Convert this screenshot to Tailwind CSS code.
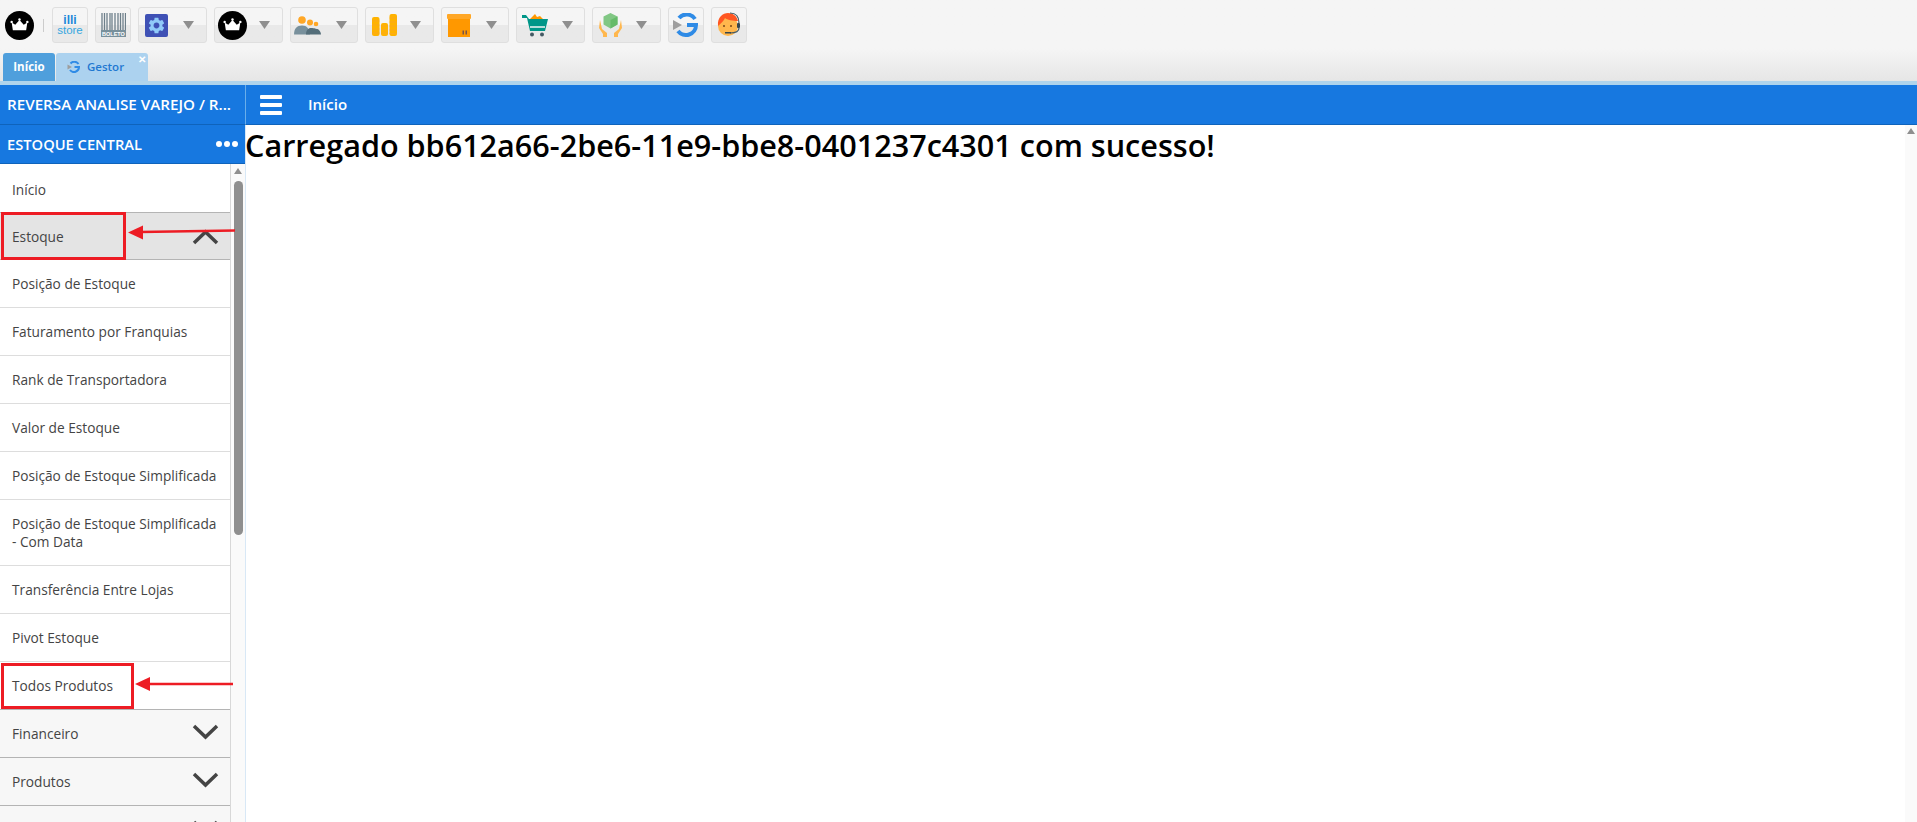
<!DOCTYPE html>
<html lang="pt-br">
<head>
    <meta charset="UTF-8" />
    <title>Gestor</title>
    <script src="https://cdn.jsdelivr.net/npm/@tailwindcss/browser@4"></script>
</head>
<body class="h-[822px] overflow-hidden bg-white font-['Open_Sans',sans-serif] text-[#444]">

    <!-- Barra de ferramentas -->
    <header class="h-[81px] bg-gradient-to-b from-[#f5f5f5] from-60% to-[#e6e6e6] flex flex-col justify-between">
        <div class="flex items-center pt-[7px] pl-[5px] h-[43px]">
            <svg class="w-[29px] h-[29px]" viewBox="0 0 24 24"><circle cx="12" cy="12" r="12" fill="#000"/><path d="M5.500 9.500l3 1.800L12 7.500l3.500 3.800 3-1.800-1 6.500h-11z" fill="#fff"/><circle cx="5.500" cy="9" r="1" fill="#fff"/><circle cx="12" cy="7" r="1" fill="#fff"/><circle cx="18.500" cy="9" r="1" fill="#fff"/></svg>
            <div class="w-px h-[13px] bg-[#ccc] ml-[9px] mr-[8px]"></div>

            <div class="w-[36px] h-[36px] border border-[#dfdfdf] rounded-[3px] bg-gradient-to-b from-[#f5f5f5] from-50% to-[#e9e9e9] to-50% flex flex-col items-center justify-center font-['Liberation_Sans',sans-serif] leading-[9px] text-[#35a7e0] mr-[7px]">
                <span class="text-[12px] font-bold text-[#1e88d8]">illi</span><span class="text-[11.500px] mt-[1px]">store</span>
            </div>
            <div class="w-[36px] h-[36px] border border-[#dfdfdf] rounded-[3px] bg-gradient-to-b from-[#f5f5f5] from-50% to-[#e9e9e9] to-50% flex items-center justify-center mr-[7px]">
                <svg class="w-[25px] h-[24px]" viewBox="0 0 25 24"><path d="M1 0v17M3.500 0v17M6 0v17M9 0v17M11 0v17M14 0v17M17 0v17M19.500 0v17M22 0v17M24.500 0v17" stroke="#6d7f8a" stroke-width="1.300"/><rect x="0" y="17" width="25" height="7" fill="#78909c"/><text x="12.500" y="22.700" text-anchor="middle" font-size="5.500" font-weight="700" fill="#fff" font-family="Liberation Sans">BOLETO</text></svg>
            </div>

            <div class="w-[69px] h-[36px] border border-[#dfdfdf] rounded-[3px] bg-gradient-to-b from-[#f5f5f5] from-50% to-[#e9e9e9] to-50% flex items-center pl-[6px] mr-[7px]">
                <svg class="w-[23px] h-[23px]" viewBox="0 0 24 24"><rect width="24" height="24" rx="2" fill="#3f51b5"/><path transform="translate(1.800 1.800) scale(.85)" d="M19.140 12.940c.04-.3.06-.61.06-.94 0-.32-.02-.64-.07-.94l2.030-1.580a.49.49 0 0 0 .12-.61l-1.920-3.320a.488.488 0 0 0-.59-.22l-2.390.96c-.5-.38-1.030-.7-1.620-.94l-.36-2.540a.484.484 0 0 0-.48-.41h-3.840c-.24 0-.43.17-.47.41l-.36 2.540c-.59.24-1.130.57-1.620.94l-2.390-.96c-.22-.08-.47 0-.59.22L2.740 8.870c-.12.21-.08.47.12.61l2.030 1.580c-.05.3-.09.63-.09.94s.02.64.07.94l-2.030 1.580a.49.49 0 0 0-.12.61l1.920 3.320c.12.22.37.29.59.22l2.390-.96c.5.38 1.030.7 1.620.94l.36 2.540c.05.24.24.41.48.41h3.840c.24 0 .44-.17.47-.41l.36-2.540c.59-.24 1.130-.56 1.620-.94l2.390.96c.22.08.47 0 .59-.22l1.920-3.320c.12-.22.07-.47-.12-.61l-2.010-1.580zM12 15.600c-1.980 0-3.600-1.620-3.600-3.600s1.620-3.600 3.600-3.600 3.600 1.620 3.600 3.600-1.620 3.600-3.600 3.600z" fill="#90caf9"/></svg>
                <svg class="w-[11px] h-[8px] ml-[15px]" viewBox="0 0 11 8"><path d="M0 0h11L5.500 8z" fill="#8f8f8f"/></svg>
            </div>

            <div class="w-[69px] h-[36px] border border-[#dfdfdf] rounded-[3px] bg-gradient-to-b from-[#f5f5f5] from-50% to-[#e9e9e9] to-50% flex items-center pl-[3px] mr-[7px]">
                <svg class="w-[29px] h-[29px]" viewBox="0 0 24 24"><circle cx="12" cy="12" r="12" fill="#000"/><path d="M5.500 9.500l3 1.800L12 7.500l3.500 3.800 3-1.800-1 6.500h-11z" fill="#fff"/><circle cx="5.500" cy="9" r="1" fill="#fff"/><circle cx="12" cy="7" r="1" fill="#fff"/><circle cx="18.500" cy="9" r="1" fill="#fff"/></svg>
                <svg class="w-[11px] h-[8px] ml-[12px]" viewBox="0 0 11 8"><path d="M0 0h11L5.500 8z" fill="#8f8f8f"/></svg>
            </div>

            <div class="w-[68px] h-[36px] border border-[#dfdfdf] rounded-[3px] bg-gradient-to-b from-[#f5f5f5] from-50% to-[#e9e9e9] to-50% flex items-center pl-[3px] mr-[7px]">
                <svg class="w-[28px] h-[19px]" viewBox="0 0 28 19"><circle cx="8" cy="4" r="3.800" fill="#ffa726"/><circle cx="16" cy="6.500" r="3" fill="#ffa726"/><circle cx="22" cy="8" r="2.300" fill="#ffa726"/><path d="M0 18.500c0-6 3-9 8-9s7 3 8 9z" fill="#78909c"/><path d="M12 18.500c0-4 2-6.500 5-6.500 4 0 5 1 6 1s4 2 4 5.500z" fill="#546e7a"/></svg>
                <svg class="w-[11px] h-[8px] ml-[14px]" viewBox="0 0 11 8"><path d="M0 0h11L5.500 8z" fill="#8f8f8f"/></svg>
            </div>

            <div class="w-[69px] h-[36px] border border-[#dfdfdf] rounded-[3px] bg-gradient-to-b from-[#f5f5f5] from-50% to-[#e9e9e9] to-50% flex items-center pl-[6px] mr-[7px]">
                <svg class="w-[25px] h-[22px]" viewBox="0 0 25 22"><rect x="0" y="3" width="7.500" height="19" rx="2" fill="#ffb300"/><rect x="9" y="9" width="7" height="13" rx="2" fill="#ffb300"/><rect x="17.500" y="0" width="7.500" height="22" rx="2" fill="#ffb300"/><path d="M0 7h7.500M0 11h7.500M0 15h7.500M0 19h7.500M9 12h7M9 15.500h7M9 19h7M17.500 4h7.500M17.500 8h7.500M17.500 12h7.500M17.500 16h7.500M17.500 19.500h7.500" stroke="#f9a825" stroke-width=".7"/></svg>
                <svg class="w-[11px] h-[8px] ml-[13px]" viewBox="0 0 11 8"><path d="M0 0h11L5.500 8z" fill="#8f8f8f"/></svg>
            </div>

            <div class="w-[68px] h-[36px] border border-[#dfdfdf] rounded-[3px] bg-gradient-to-b from-[#f5f5f5] from-50% to-[#e9e9e9] to-50% flex items-center pl-[5px] mr-[7px]">
                <svg class="w-[24px] h-[23px]" viewBox="0 0 24 23"><rect width="24" height="5" rx="1" fill="#ffa726"/><rect x="1" y="5" width="22" height="18" fill="#ff9800"/><path d="M15.500 16.500h1.500v4h-1.500zM18.500 16.500h1.500v4h-1.500z" fill="#795548"/></svg>
                <svg class="w-[11px] h-[8px] ml-[15px]" viewBox="0 0 11 8"><path d="M0 0h11L5.500 8z" fill="#8f8f8f"/></svg>
            </div>

            <div class="w-[69px] h-[36px] border border-[#dfdfdf] rounded-[3px] bg-gradient-to-b from-[#f5f5f5] from-50% to-[#e9e9e9] to-50% flex items-center pl-[5px] mr-[7px]">
                <svg class="w-[26px] h-[24px]" viewBox="0 0 26 24"><path d="M8 6l5-5 2 3 3-1 3 3z" fill="#ff9800"/><path d="M0 2h4l3 4h19l-3 12H8L5 5H0z" fill="#009688"/><path d="M8 14h15" stroke="#f5f5f5" stroke-width="1.500"/><circle cx="10" cy="21.500" r="2" fill="#455a64"/><circle cx="20" cy="21.500" r="2" fill="#455a64"/></svg>
                <svg class="w-[11px] h-[8px] ml-[14px]" viewBox="0 0 11 8"><path d="M0 0h11L5.500 8z" fill="#8f8f8f"/></svg>
            </div>

            <div class="w-[69px] h-[36px] border border-[#dfdfdf] rounded-[3px] bg-gradient-to-b from-[#f5f5f5] from-50% to-[#e9e9e9] to-50% flex items-center pl-[6px] mr-[7px]">
                <svg class="w-[23px] h-[24px]" viewBox="0 0 23 24"><path d="M11.500 0l7 3.500v8l-7 4-7-4v-8z" fill="#81c784"/><path d="M11.500 7l7-3.500v8l-7 4z" fill="#66bb6a"/><path d="M1 7l2 9 5 4v4H4v-3L0 15zM22 7l-2 9-5 4v4h4v-3l4-6z" fill="#ffb74d"/></svg>
                <svg class="w-[11px] h-[8px] ml-[14px]" viewBox="0 0 11 8"><path d="M0 0h11L5.500 8z" fill="#8f8f8f"/></svg>
            </div>

            <div class="w-[36px] h-[36px] border border-[#dfdfdf] rounded-[3px] bg-gradient-to-b from-[#f5f5f5] from-50% to-[#e9e9e9] to-50% flex items-center justify-center mr-[7px]">
                <svg class="w-[26px] h-[24px]" viewBox="0 0 26 24"><path d="M22 6a10 10 0 0 0-16-1M5 18a10 10 0 0 0 18-6H14" fill="none" stroke="#2f8be6" stroke-width="4"/><path d="M0 7l9 5-9 5z" fill="#9e9e9e"/></svg>
            </div>
            <div class="w-[36px] h-[36px] border border-[#dfdfdf] rounded-[3px] bg-gradient-to-b from-[#f5f5f5] from-50% to-[#e9e9e9] to-50% flex items-center justify-center">
                <svg class="w-[26px] h-[26px]" viewBox="0 0 26 26"><circle cx="12" cy="14" r="10" fill="#ffb74d"/><path d="M2 14C1 5 7 1 12 1s9 3 10 8c-5 0-11-1-13-3-1 3-4 5-7 8z" fill="#ff5722"/><path d="M14 1c6 0 9 4 9 10" fill="none" stroke="#455a64" stroke-width="1.200"/><rect x="21" y="11" width="3" height="5" rx="1" fill="#37474f"/><path d="M23 16c0 4-4 5-9 5" fill="none" stroke="#455a64" stroke-width="1.200"/><rect x="9" y="20" width="6" height="1.500" fill="#37474f"/><circle cx="8" cy="14" r="1" fill="#784719"/><circle cx="15" cy="14" r="1" fill="#784719"/></svg>
            </div>
        </div>

        <!-- Abas -->
        <div class="flex pl-[3px] gap-px h-[28px] text-[11.500px]">
            <div class="w-[52px] rounded-t-[3px] bg-[#4f9fdc] text-white font-bold flex items-center justify-center">Início</div>
            <div class="relative w-[92px] rounded-t-[3px] bg-[#acd2ef] text-[#1f78d1] font-semibold flex items-center pl-[11px]">
                <svg class="w-[14px] h-[12px] mr-[6px]" viewBox="0 0 26 24"><path d="M22 6a10 10 0 0 0-16-1M5 18a10 10 0 0 0 18-6H14" fill="none" stroke="#2f8be6" stroke-width="4"/><path d="M0 7l9 5-9 5z" fill="#9e9e9e"/></svg>
                Gestor
                <span class="absolute right-[2px] top-[-1px] text-[10px] leading-[14px] text-white">✕</span>
            </div>
        </div>
    </header>
    <div class="h-[4px] bg-[#b0d4ec]"></div>

    <div class="flex h-[737px]">
        <!-- Menu lateral -->
        <aside class="w-[245px] shrink-0 flex flex-col">
            <div class="h-[40px] bg-[#1778e0] text-white text-[15.200px] font-semibold flex items-center pl-[7px] border-b border-[#0f63bb] shrink-0">REVERSA ANALISE VAREJO / R...</div>
            <div class="h-[39px] bg-[#1778e0] text-white text-[14.700px] font-semibold flex items-center justify-between pl-[7px] pr-[7px] border-b border-[#0f63bb] shrink-0">
                <span>ESTOQUE CENTRAL</span>
                <span class="flex gap-[2px]">
                    <i class="block w-[6px] h-[6px] rounded-full bg-white"></i><i class="block w-[6px] h-[6px] rounded-full bg-white"></i><i class="block w-[6px] h-[6px] rounded-full bg-white"></i>
                </span>
            </div>

            <div class="relative flex-1 flex overflow-hidden">
                <nav class="w-[231px] shrink-0 border-r border-[#d8d8d8] text-[13.700px] leading-[18px]">
                    <div class="h-[48px] flex items-center pl-[12px] pt-[3px]">Início</div>
                    <div class="h-[48px] flex items-center justify-between pl-[12px] pr-[11px] pt-[1px] bg-[#e4e4e4] border-y border-[#b4b4b4]">
                        Estoque
                        <svg class="w-[27px] h-[16px]" viewBox="0 0 27 16"><path d="M2 14L13.500 3 25 14" fill="none" stroke="#444" stroke-width="3.500"/></svg>
                    </div>
                    <div class="h-[48px] flex items-center pl-[12px] pt-[1px] border-b border-[#ddd]">Posição de Estoque</div>
                    <div class="h-[48px] flex items-center pl-[12px] pt-[1px] border-b border-[#ddd]">Faturamento por Franquias</div>
                    <div class="h-[48px] flex items-center pl-[12px] pt-[1px] border-b border-[#ddd]">Rank de Transportadora</div>
                    <div class="h-[48px] flex items-center pl-[12px] pt-[1px] border-b border-[#ddd]">Valor de Estoque</div>
                    <div class="h-[48px] flex items-center pl-[12px] pt-[1px] border-b border-[#ddd]">Posição de Estoque Simplificada</div>
                    <div class="h-[66px] flex items-center pl-[12px] pr-[12px] pt-[1px] border-b border-[#ddd]">Posição de Estoque Simplificada - Com Data</div>
                    <div class="h-[48px] flex items-center pl-[12px] pt-[1px] border-b border-[#ddd]">Transferência Entre Lojas</div>
                    <div class="h-[48px] flex items-center pl-[12px] pt-[1px] border-b border-[#ddd]">Pivot Estoque</div>
                    <div class="h-[47px] flex items-center pl-[12px]">Todos Produtos</div>
                    <div class="h-[48px] flex items-center justify-between pl-[12px] pr-[11px] bg-[#f7f7f7] border-t border-[#b4b4b4]">
                        Financeiro
                        <svg class="w-[27px] h-[16px] mb-[4px]" viewBox="0 0 27 16"><path d="M2 2l11.500 11L25 2" fill="none" stroke="#444" stroke-width="3.500"/></svg>
                    </div>
                    <div class="h-[48px] flex items-center justify-between pl-[12px] pr-[11px] bg-[#f7f7f7] border-t border-[#b4b4b4]">
                        Produtos
                        <svg class="w-[27px] h-[16px] mb-[4px]" viewBox="0 0 27 16"><path d="M2 2l11.500 11L25 2" fill="none" stroke="#444" stroke-width="3.500"/></svg>
                    </div>
                    <div class="h-[48px] flex justify-end pr-[11px] pt-[14px] bg-[#f7f7f7] border-t border-[#b4b4b4]">
                        <svg class="w-[27px] h-[16px]" viewBox="0 0 27 16"><path d="M2 2l11.500 11L25 2" fill="none" stroke="#444" stroke-width="3.500"/></svg>
                    </div>
                </nav>

                <!-- Barra de rolagem -->
                <div class="w-[14px] shrink-0 bg-[#fafafa] flex flex-col items-center pt-[4px]">
                    <svg class="w-[8px] h-[6px]" viewBox="0 0 8 6"><path d="M4 0l4 6H0z" fill="#8f8f8f"/></svg>
                    <div class="w-[9px] h-[354px] mt-[7px] rounded-full bg-[#8f8f8f]"></div>
                </div>

                <!-- Marcações em vermelho -->
                <div class="absolute left-[1px] top-[48px] w-[125px] h-[48px] border-[3px] border-[#ed1c24]"></div>
                <div class="absolute left-[1px] top-[499px] w-[133px] h-[46px] border-[3px] border-[#ed1c24]"></div>
                <svg class="absolute left-0 top-0 w-[245px] h-[600px] pointer-events-none" viewBox="0 0 245 600">
                    <path d="M140 68L235 66.500" stroke="#ed1c24" stroke-width="2.500"/>
                    <path d="M128 68.500l15-7v14z" fill="#ed1c24"/>
                    <path d="M148 520h85" stroke="#ed1c24" stroke-width="2.500"/>
                    <path d="M135 520l15-7v14z" fill="#ed1c24"/>
                </svg>
            </div>
        </aside>

        <!-- Conteúdo -->
        <div class="w-px bg-[#d8e8f6] shrink-0"></div>
        <main class="flex-1 flex flex-col min-w-0">
            <div class="h-[40px] bg-[#1778e0] border-b border-[#0f63bb] text-white flex items-center shrink-0 border-l border-l-[#6aaeea] -ml-px">
                <div class="flex flex-col gap-[4px] ml-[14px] mr-[26px]">
                    <i class="block w-[22px] h-[4px] rounded-[1px] bg-white"></i><i class="block w-[22px] h-[4px] rounded-[1px] bg-white"></i><i class="block w-[22px] h-[4px] rounded-[1px] bg-white"></i>
                </div>
                <span class="text-[15px] font-semibold">Início</span>
            </div>
            <div class="flex-1 flex">
                <h1 class="flex-1 -ml-px pt-[1px] text-[30.600px] leading-[38px] font-semibold text-black">Carregado bb612a66-2be6-11e9-bbe8-0401237c4301 com sucesso!</h1>
                <div class="w-[12px] bg-[#fafafa] flex justify-center pt-[3px]">
                    <svg class="w-[8px] h-[6px]" viewBox="0 0 8 6"><path d="M4 0l4 6H0z" fill="#8f8f8f"/></svg>
                </div>
            </div>
        </main>
    </div>
</body>
</html>
